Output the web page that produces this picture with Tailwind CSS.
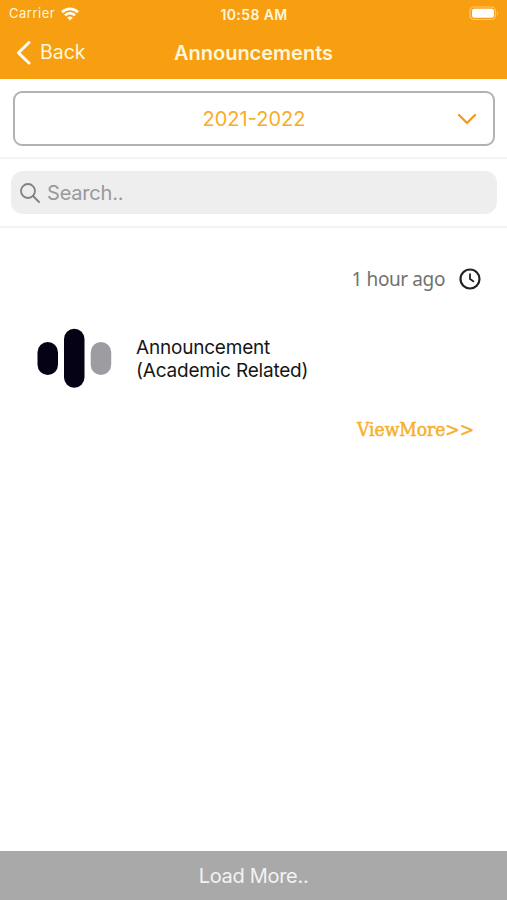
<!DOCTYPE html>
<html lang="en">
<head>
<meta charset="utf-8">
<title>Announcements</title>
<script src="https://cdn.jsdelivr.net/npm/@tailwindcss/browser@4"></script>
</head>
<body class="bg-white font-['Inter',sans-serif]">
<div class="w-[507px] h-[900px] flex flex-col overflow-hidden whitespace-nowrap">
  <header class="h-[79px] shrink-0 bg-[#f79f10] text-[#fff6dc]">
    <div class="h-[27px] grid grid-cols-3 items-center pl-[9px] pr-[8px] text-[13px]">
      <div class="flex items-center gap-[6px]">
        <span class="tracking-[0.5px] pt-px">Carrier</span>
        <svg class="w-[18px] h-[14px]" viewBox="0 0 18 14" fill="none" stroke="#fffdf5" stroke-width="2.6"><path d="M1 5.2C5.600.8 12.400.8 17 5.200M4 8.400c2.900-2.700 7.100-2.700 10 0"/><path d="M9 13.500 6.200 10.700c1.600-1.500 4-1.500 5.600 0Z" fill="#fffdf5" stroke="none"/></svg>
      </div>
      <span class="text-center font-semibold text-[14px] tracking-[0.4px] pt-px">10:58 AM</span>
      <svg class="w-[30px] h-[15px] justify-self-end" viewBox="0 0 30 15"><rect x="1" y="1" width="25.500" height="12.500" rx="4" fill="none" stroke="#fbc878" stroke-width="1.200"/><rect x="3" y="2.800" width="22" height="9" rx="2.200" fill="#fff"/><path d="M28 5.500c1.600.6 1.600 3.200 0 3.800Z" fill="#fbc878"/></svg>
    </div>
    <div class="h-[51px] grid grid-cols-[1fr_auto_1fr] items-center pl-[16px] pr-[16px]">
      <div class="flex items-center gap-[9px]">
        <svg class="w-[15px] h-[24px]" viewBox="0 0 15 24" fill="none" stroke="#fffdf5" stroke-width="3" stroke-linecap="round" stroke-linejoin="round"><path d="M13 1.500 2.500 11.800 13 22"/></svg>
        <span class="text-[19.500px] pt-px">Back</span>
      </div>
      <h1 class="text-[20px] font-semibold pt-px">Announcements</h1>
    </div>
  </header>
  <section class="h-[80px] shrink-0 border-b-2 border-[#f4f4f4] pt-[12px] pl-[13px] pr-[12px]">
    <div class="h-[55px] border-2 border-[#b2b2b2] rounded-[9px] grid grid-cols-[1fr_auto_1fr] items-center pr-[16px] pl-[16px]">
      <span class="col-start-2 text-[20px] text-[#f8ad26] pt-px">2021-2022</span>
      <svg class="w-[20px] h-[12px] justify-self-end" viewBox="0 0 20 12" fill="none" stroke="#f39a1c" stroke-width="2.300" stroke-linecap="round" stroke-linejoin="round"><path d="m2 2 8 8 8-8"/></svg>
    </div>
  </section>
  <section class="h-[69px] shrink-0 border-b-2 border-[#f4f4f4] pt-[12px] pl-[11px] pr-[10px]">
    <div class="h-[43px] rounded-[12px] bg-[#eee] flex items-center pl-[9px] gap-[7px] text-[#98989c]">
      <svg class="w-[20px] h-[20px]" viewBox="0 0 20 20" fill="none" stroke="#808084" stroke-width="1.800" stroke-linecap="round"><circle cx="8" cy="8" r="7"/><path d="m13 13 6 6"/></svg>
      <span class="text-[20px] tracking-[-0.2px] pt-px">Search..</span>
    </div>
  </section>
  <main class="flex-1">
    <div class="h-[28px] mt-[37px] flex items-center justify-end gap-[14px] pr-[26px] font-['Noto_Sans',sans-serif]">
      <span class="text-[19px] tracking-[-0.400px] text-[#717171] pt-px">1 hour ago</span>
      <svg class="w-[22px] h-[22px]" viewBox="0 0 22 22" fill="none" stroke="#222" stroke-width="2.200"><circle cx="11" cy="11" r="9.500"/><path d="M11 5.500V11l4 2.700" stroke-width="1.800"/></svg>
    </div>
    <div class="mt-[35px] pl-[37px] flex items-center gap-[24px]">
      <svg class="w-[75px] h-[60px]" viewBox="0 0 75 60"><rect x=".5" y="14" width="20.500" height="33" rx="10.200" fill="#060216"/><rect x="27" y=".8" width="20.500" height="59" rx="10.200" fill="#060216"/><rect x="53.700" y="14" width="20.500" height="33" rx="10.200" fill="#9d9ca0"/></svg>
      <p class="text-[19px] tracking-[-0.200px] leading-[23px] text-[#161616] pt-[2px]">Announcement<br>(Academic Related)</p>
    </div>
    <div class="mt-[27px] pr-[33px] text-right font-['DejaVu_Serif_Condensed','DejaVu_Serif',serif] text-[19px] leading-[28px] text-[#f6b02c] [-webkit-text-stroke:0.500px_#f6b02c]">ViewMore&gt;&gt;</div>
  </main>
  <footer class="h-[49px] shrink-0 bg-[#a9a9a9] flex items-center justify-center text-[20px] tracking-[-0.300px] text-[#f3f3f3] pt-px">Load More..</footer>
</div>
</body>
</html>
